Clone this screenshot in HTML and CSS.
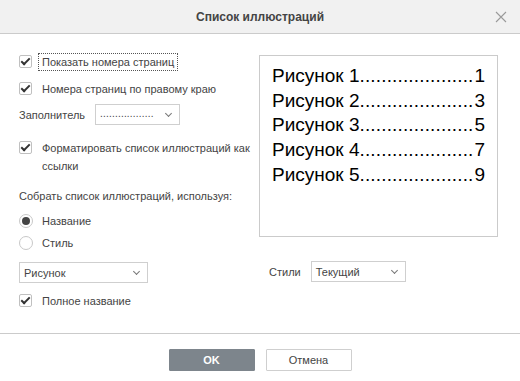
FILE: index.html
```html
<!DOCTYPE html>
<html lang="ru">
<head>
    <meta charset="UTF-8">
    <title>Список иллюстраций</title>
    <link rel="stylesheet" href="styles.css">
</head>
<body>
    <div class="dialog">
        <header class="dialog-header">
            <span class="dialog-title">Список иллюстраций</span>
            <svg class="close-icon" width="12" height="12" viewBox="0 0 12 12">
                <path d="M1 1 L11 11 M11 1 L1 11" stroke="#9a9a9a" stroke-width="1.1" fill="none"/>
            </svg>
        </header>

        <div class="dialog-body">
            <div class="col-left">
                <label class="check row-cb1">
                    <span class="box checked"></span>
                    <span class="focus-text">Показать номера страниц</span>
                </label>
                <label class="check row-cb2">
                    <span class="box checked"></span>
                    <span>Номера страниц по правому краю</span>
                </label>
                <div class="field row-filler">
                    <span class="field-label">Заполнитель</span>
                    <div class="select select-filler">
                        <span class="filler-dots">..................</span>
                        <span class="chevron"></span>
                    </div>
                </div>
                <label class="check check-multi row-cb3">
                    <span class="box checked"></span>
                    <span>Форматировать список иллюстраций как ссылки</span>
                </label>
                <div class="section-label">Собрать список иллюстраций, используя:</div>
                <label class="radio row-radio1">
                    <span class="dot selected"></span>
                    <span>Название</span>
                </label>
                <label class="radio row-radio2">
                    <span class="dot"></span>
                    <span>Стиль</span>
                </label>
                <div class="select select-caption">
                    <span>Рисунок</span>
                    <span class="chevron"></span>
                </div>
                <label class="check row-cb4">
                    <span class="box checked"></span>
                    <span>Полное название</span>
                </label>
            </div>

            <div class="col-right">
                <div class="preview">
                    <div class="toc-line"><span>Рисунок 1<span class="leader">.....................</span></span><span>1</span></div>
                    <div class="toc-line"><span>Рисунок 2<span class="leader">.....................</span></span><span>3</span></div>
                    <div class="toc-line"><span>Рисунок 3<span class="leader">.....................</span></span><span>5</span></div>
                    <div class="toc-line"><span>Рисунок 4<span class="leader">.....................</span></span><span>7</span></div>
                    <div class="toc-line"><span>Рисунок 5<span class="leader">.....................</span></span><span>9</span></div>
                </div>
                <div class="field row-styles">
                    <span class="field-label">Стили</span>
                    <div class="select select-styles">
                        <span>Текущий</span>
                        <span class="chevron"></span>
                    </div>
                </div>
            </div>
        </div>

        <footer class="dialog-footer">
            <button class="btn btn-primary">OK</button>
            <button class="btn">Отмена</button>
        </footer>
    </div>
</body>
</html>
```

FILE: styles.css
```css
body {
    margin: 0;
    padding: 0;
    font-family: 'Liberation Sans', Arial, sans-serif;
    font-size: 11px;
    color: #444;
    background: #fff;
}
.dialog {
    width: 520px;
    height: 381px;
    display: flex;
    flex-direction: column;
    background: #fff;
}
.dialog-header {
    height: 34px;
    flex-shrink: 0;
    box-sizing: border-box;
    background: #f1f1f1;
    border-bottom: 1px solid #cbcbcb;
    display: flex;
    align-items: center;
    justify-content: center;
    position: relative;
}
.dialog-title {
    font-size: 12px;
    font-weight: bold;
    color: #444;
}
.close-icon {
    position: absolute;
    right: 13px;
    top: 11px;
}
.dialog-body {
    flex: 1;
    display: flex;
    padding: 21px 22px 0 19px;
}
.col-left {
    width: 240px;
    flex-shrink: 0;
    display: flex;
    flex-direction: column;
}
.col-right {
    flex: 1;
    min-width: 0;
    display: flex;
    flex-direction: column;
}

/* checkbox / radio */
.check, .radio {
    display: flex;
    align-items: center;
    height: 13px;
}
.box {
    width: 11px;
    height: 11px;
    border: 1px solid #c0c0c0;
    border-radius: 2px;
    margin-right: 10px;
    flex-shrink: 0;
    position: relative;
    background: #fff;
}
.box.checked::after {
    content: "";
    position: absolute;
    left: 3px;
    top: 0px;
    width: 3px;
    height: 7px;
    border: solid #333;
    border-width: 0 2px 2px 0;
    transform: rotate(45deg);
}
.focus-text {
    outline: 1px dotted #555;
    outline-offset: 2px;
    padding: 0 1px;
    margin-left: -1px;
}
.row-cb1 { margin-top: 0; }
.row-cb2 { margin-top: 14px; }
.row-filler { margin-top: 9px; }
.check-multi {
    align-items: flex-start;
    height: auto;
    line-height: 18px;
    margin-top: 14px;
}
.check-multi .box { margin-top: 2px; }
.section-label { margin-top: 15px; }
.row-radio1 { margin-top: 12px; }
.row-radio2 { margin-top: 9px; }
.select-caption { margin-top: 13px; }
.row-cb4 { margin-top: 11px; }

.dot {
    width: 14px;
    height: 14px;
    border: 1px solid #c8c8c8;
    border-radius: 50%;
    box-sizing: border-box;
    margin-right: 9px;
    flex-shrink: 0;
    position: relative;
}
.dot.selected::after {
    content: "";
    position: absolute;
    left: 2px;
    top: 2px;
    width: 8px;
    height: 8px;
    border-radius: 50%;
    background: #444;
}

/* fields */
.field {
    display: flex;
    align-items: center;
}
.field-label { margin-right: 10px; }
.select {
    height: 21px;
    box-sizing: border-box;
    border: 1px solid #cfcfcf;
    display: flex;
    align-items: center;
    justify-content: space-between;
    padding: 0 8px 0 4px;
    color: #444;
}
.select-filler {
    width: 85px;
    font-size: 10px;
}
.filler-dots {
    letter-spacing: 0.2px;
    padding-bottom: 3px;
}
.select-caption { width: 129px; }
.select-styles { width: 95px; }
.chevron {
    width: 4px;
    height: 4px;
    border: solid #777;
    border-width: 0 1px 1px 0;
    transform: rotate(45deg);
    margin-top: -3px;
}

/* preview */
.preview {
    height: 182px;
    box-sizing: border-box;
    border: 1px solid #cbcbcb;
    padding: 8px 12px 0 12px;
    color: #000;
    font-size: 19px;
    line-height: 24.7px;
}
.toc-line {
    display: flex;
    justify-content: space-between;
    white-space: nowrap;
}
.leader {
    letter-spacing: 0.15px;
}
.row-styles {
    margin-top: 24px;
    margin-left: 10px;
}

/* footer */
.dialog-footer {
    height: 48px;
    flex-shrink: 0;
    box-sizing: border-box;
    border-top: 1px solid #cbcbcb;
    display: flex;
    justify-content: center;
    align-items: flex-start;
    padding-top: 15px;
    gap: 11px;
}
.btn {
    width: 86px;
    height: 22px;
    font-family: 'Liberation Sans', Arial, sans-serif;
    font-size: 11px;
    color: #444;
    background: #fff;
    border: 1px solid #cfcfcf;
    border-radius: 1px;
}
.btn-primary {
    background: #7d858c;
    border-color: #7d858c;
    color: #fff;
    font-weight: bold;
}
```
